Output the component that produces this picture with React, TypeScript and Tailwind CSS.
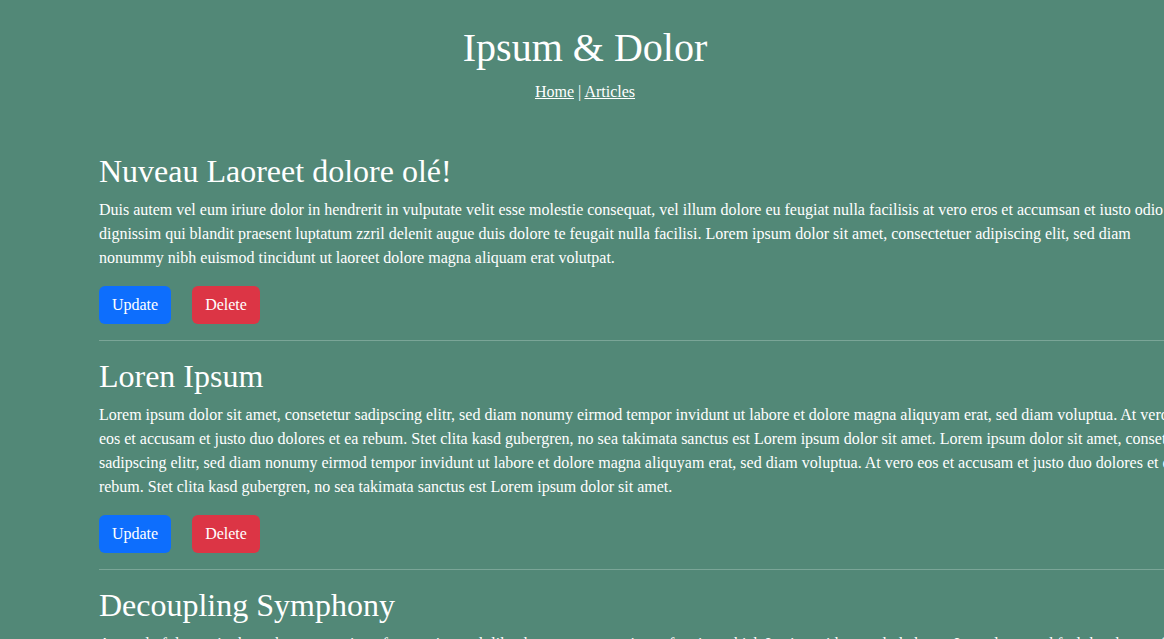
const articles = [
  {
    title: "Nuveau Laoreet dolore olé!",
    text: "Duis autem vel eum iriure dolor in hendrerit in vulputate velit esse molestie consequat, vel illum dolore eu feugiat nulla facilisis at vero eros et accumsan et iusto odio dignissim qui blandit praesent luptatum zzril delenit augue duis dolore te feugait nulla facilisi. Lorem ipsum dolor sit amet, consectetuer adipiscing elit, sed diam nonummy nibh euismod tincidunt ut laoreet dolore magna aliquam erat volutpat.",
  },
  {
    title: "Loren Ipsum",
    text: "Lorem ipsum dolor sit amet, consetetur sadipscing elitr, sed diam nonumy eirmod tempor invidunt ut labore et dolore magna aliquyam erat, sed diam voluptua. At vero eos et accusam et justo duo dolores et ea rebum. Stet clita kasd gubergren, no sea takimata sanctus est Lorem ipsum dolor sit amet. Lorem ipsum dolor sit amet, consetetur sadipscing elitr, sed diam nonumy eirmod tempor invidunt ut labore et dolore magna aliquyam erat, sed diam voluptua. At vero eos et accusam et justo duo dolores et ea rebum. Stet clita kasd gubergren, no sea takimata sanctus est Lorem ipsum dolor sit amet.",
  },
  {
    title: "Decoupling Symphony",
    text: "A wonderful serenity has taken possession of my entire soul, like these sweet mornings of spring which I enjoy with my whole heart. I am alone, and feel the charm of existence in this spot, which was created for the bliss of souls like mine.",
  },
];

function Article({ title, text }: { title: string; text: string }) {
  return (
    <article className="border-b border-[#7aa597] pt-4 pb-4">
      <h2 className="mb-2 text-[32px] leading-[38px]">{title}</h2>
      <p className="mb-4">{text}</p>
      <div className="flex gap-[21px]">
        <button type="button" className="rounded-md bg-[#0d6efd] px-[13px] py-[7px]">
          Update
        </button>
        <button type="button" className="rounded-md bg-[#dc3545] px-[13px] py-[7px]">
          Delete
        </button>
      </div>
    </article>
  );
}

export default function App() {
  return (
    <div className="h-screen overflow-hidden bg-[#528877] font-['Liberation_Serif',serif] text-base leading-6 text-white">
      <header className="pt-6 pl-[6px] text-center">
        <h1 className="mb-2 text-[40px] leading-[48px]">Ipsum &amp; Dolor</h1>
        <nav>
          <a href="#home" className="underline">Home</a> |{" "}
          <a href="#articles" className="underline">Articles</a>
        </nav>
      </header>
      <main className="mt-8 -mr-[29px] ml-[8.5%]">
        {articles.map((article) => (
          <Article key={article.title} {...article} />
        ))}
      </main>
    </div>
  );
}
